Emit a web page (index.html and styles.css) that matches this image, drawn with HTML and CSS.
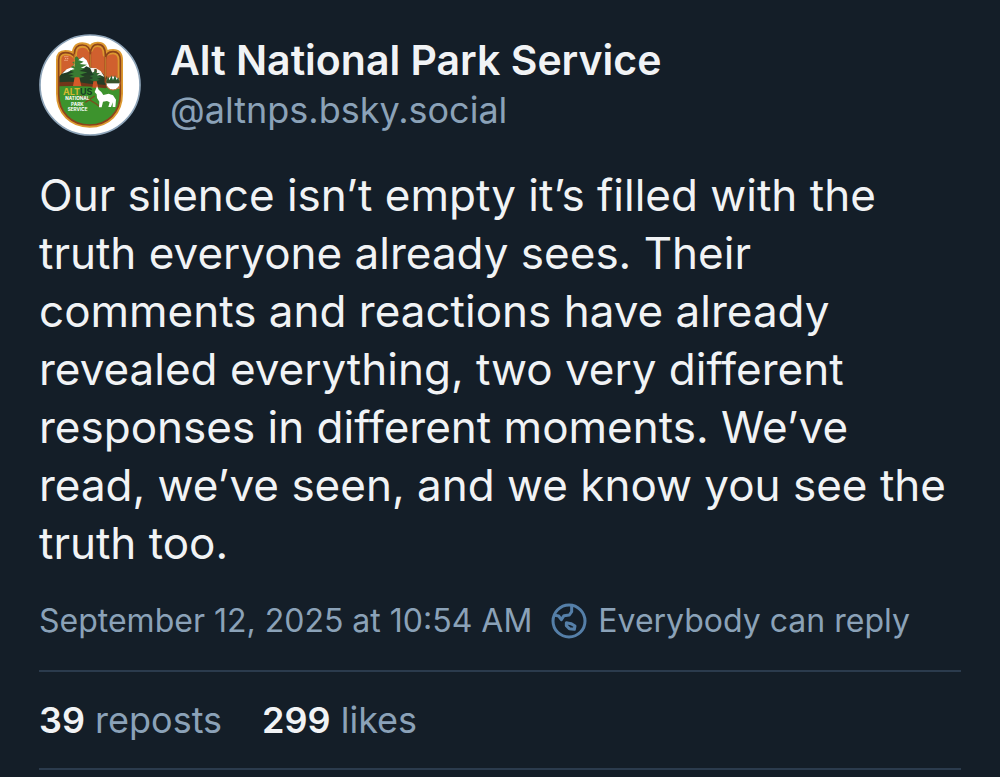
FILE: index.html
```html
<!DOCTYPE html>
<html lang="en">

<head>
    <meta charset="utf-8">
    <meta name="viewport" content="width=device-width, initial-scale=1">
    <title>Alt National Park Service</title>
    <link rel="stylesheet" href="styles.css">
</head>

<body>
    <article class="post">
        <header class="author">
            <svg class="avatar" viewBox="27 27 306 306" aria-hidden="true">
                <defs>
                    <clipPath id="hand">
                        <path d="M86 105Q86 83 106 83Q124 83 133 92Q132 60 157 60Q175 60 181 74Q186 58 203 58Q226 58 226 88Q233 80 249 80Q271 80 271 106V206C271 262 234 300 179 300C124 300 86 262 86 206Z" />
                    </clipPath>
                </defs>
                <circle cx="180" cy="180" r="150" fill="#fff" stroke="#8fa5b9" stroke-width="5" />
                <path d="M86 105Q86 83 106 83Q124 83 133 92Q132 60 157 60Q175 60 181 74Q186 58 203 58Q226 58 226 88Q233 80 249 80Q271 80 271 106V206C271 262 234 300 179 300C124 300 86 262 86 206Z" fill="#d0602e" stroke="#dc982f" stroke-width="16" stroke-linejoin="round" />
                <g clip-path="url(#hand)">
                    <!-- mountains -->
                    <path d="M84 158L103 138L123 129L143 105L159 96L178 126L198 132L219 146L230 164V192H84Z" fill="#213d25" />
                    <path d="M96 146L110 133L127 126L143 106L159 96L170 106L180 129L169 124L158 132L148 126L137 137L127 134L112 142Z" fill="#fff" />
                    <path d="M180 128L198 130L212 138L224 157L210 150L198 153L186 142Z" fill="#f7f5ee" />
                    <path d="M84 160L112 148L140 158L174 148L204 158L230 154V188H84Z" fill="#263e25" />
                    <path d="M84 177Q125 169 179 179T273 192V304H84Z" fill="#3d932d" />
                    <path d="M86 172Q130 167 178 176L229 180L228 190Q155 180 86 184Z" fill="#713619" />
                    <!-- trees -->
                    <path d="M136 97H144V181H134Z" fill="#83451f" />
                    <path d="M140 94L148 103L144 105L161 110L149 117L171 119L152 129L166 130L148 138L172 142L150 149L164 155L141 160L118 156L132 150L114 148L132 141L119 137L134 132L122 126L135 120L127 112L137 108L131 102Z" fill="#397c32" />
                    <path d="M193 132H200V186H192Z" fill="#7b3d1c" />
                    <path d="M196 131L201 139L197 143L210 145L200 151L218 156L201 161L210 164L196 170L178 164L190 159L179 153L192 149L185 144L193 140Z" fill="#2e6630" />
                    <path d="M134 157H148L154 183H129Z" fill="#d65a29" />
                    <path d="M190 169H200L205 188H187Z" fill="#c85326" />
                    <path d="M150 212Q183 224 211 246M166 232L194 213" fill="none" stroke="#79501e" stroke-width="4" />
                </g>
                <!-- finger outlines -->
                <path d="M86 206V105Q86 83 106 83Q124 83 133 94M133 98V87Q134 60 157 60Q181 60 181 89V126M181 89Q182 58 203 58Q226 58 226 90V157M226 173V105Q227 80 249 80Q271 80 271 106V206C271 262 234 300 179 300C124 300 86 262 86 206" fill="none" stroke="#8c431b" stroke-width="5" />
                <path d="M133 88V126M181 88V128M226 96V158" fill="none" stroke="#dfa036" stroke-width="2" />
                <circle cx="249" cy="174" r="21" fill="#fff" stroke="#bd622d" stroke-width="3" />
                <path d="M230 169L234 154L239 166L244 151L249 165L255 151L260 165L265 157L268 173H230Z" fill="#276331" />
                <path d="M229 166H269V175H229Z" fill="#3b522a" />
                <!-- wolf -->
                <path d="M194 201L201 184L206 194L214 201L220 210L236 206L249 211L258 224L256 246H248V232L243 246H235L239 232L231 228L219 230L215 247H207L208 230L201 219L200 208Z" fill="#fff" />
                <path d="M103 95H116M105 101H117M103 106H113" stroke="#f2b28e" stroke-width="3" stroke-dasharray="4 2" />
                <g class="badge-text" text-anchor="middle">
                    <text x="143" y="211" font-size="27" fill="#d4b72f">ALT<tspan fill="#173e25">US</tspan></text>
                    <text x="142" y="226" font-size="14">NATIONAL</text>
                    <text x="142" y="242" font-size="14">PARK</text>
                    <text x="143" y="259" font-size="14">SERVICE</text>
                </g>
            </svg>
            <div class="names">
                <div class="name">Alt National Park Service</div>
                <div class="handle">@altnps.bsky.social</div>
            </div>
        </header>

        <p class="text">Our silence isn’t empty it’s filled with the truth everyone already sees. Their comments and reactions have already revealed everything, two very different responses in different moments. We’ve read, we’ve seen, and we know you see the truth too.</p>

        <div class="meta">
            <time datetime="2025-09-12T10:54">September 12, 2025 at 10:54 AM</time>
            <div class="reply">
                <svg class="globe" viewBox="0 0 114 114" aria-hidden="true">
                    <g fill="none" stroke="#557fa8" stroke-width="9" stroke-linejoin="round">
                        <circle cx="57" cy="57" r="48" />
                        <path d="M15 40L26 42L34 53L42 41L58 39L65 29V12" />
                        <path d="M49 62L63 65L75 72L73 82L58 80L49 71Z" />
                    </g>
                </svg>
                <span>Everybody can reply</span>
            </div>
        </div>

        <div class="stats">
            <span><strong>39</strong> reposts</span>
            <span><strong>299</strong> likes</span>
        </div>
    </article>
</body>

</html>
```
FILE: styles.css
```css
* {
    margin: 0;
    padding: 0;
    box-sizing: border-box;
}

body {
    background-color: #141e28;
    color: #f1f3f5;
    font-family: Inter, "Liberation Sans", sans-serif;
}

.post {
    padding: 34px 39px 7px;
}

.author {
    display: flex;
    align-items: center;
    gap: 29px;
}

.avatar {
    width: 102px;
    height: 102px;
    flex-shrink: 0;
}

.badge-text {
    fill: #fff;
    font-weight: 700;
}

.name {
    font-size: 41px;
    font-weight: 600;
    line-height: 50px;
}

.handle {
    font-size: 36px;
    line-height: 50px;
    color: #8ba2b8;
}

.text {
    margin-top: 30px;
    font-size: 44px;
    line-height: 58px;
}

.meta {
    display: flex;
    align-items: center;
    gap: 18px;
    margin-top: 29px;
    font-size: 32px;
    line-height: 40px;
    color: #8ba2b8;
}

.reply {
    display: flex;
    align-items: center;
    gap: 10px;
}

.globe {
    width: 38px;
    height: 38px;
}

.stats {
    display: flex;
    gap: 40px;
    margin-top: 29px;
    padding: 24px 0;
    border-top: 2px solid #2b3b4d;
    border-bottom: 2px solid #2b3b4d;
    font-size: 36px;
    line-height: 48px;
    color: #8ba2b8;
}

.stats strong {
    font-weight: 600;
    color: #f1f3f5;
}
```
